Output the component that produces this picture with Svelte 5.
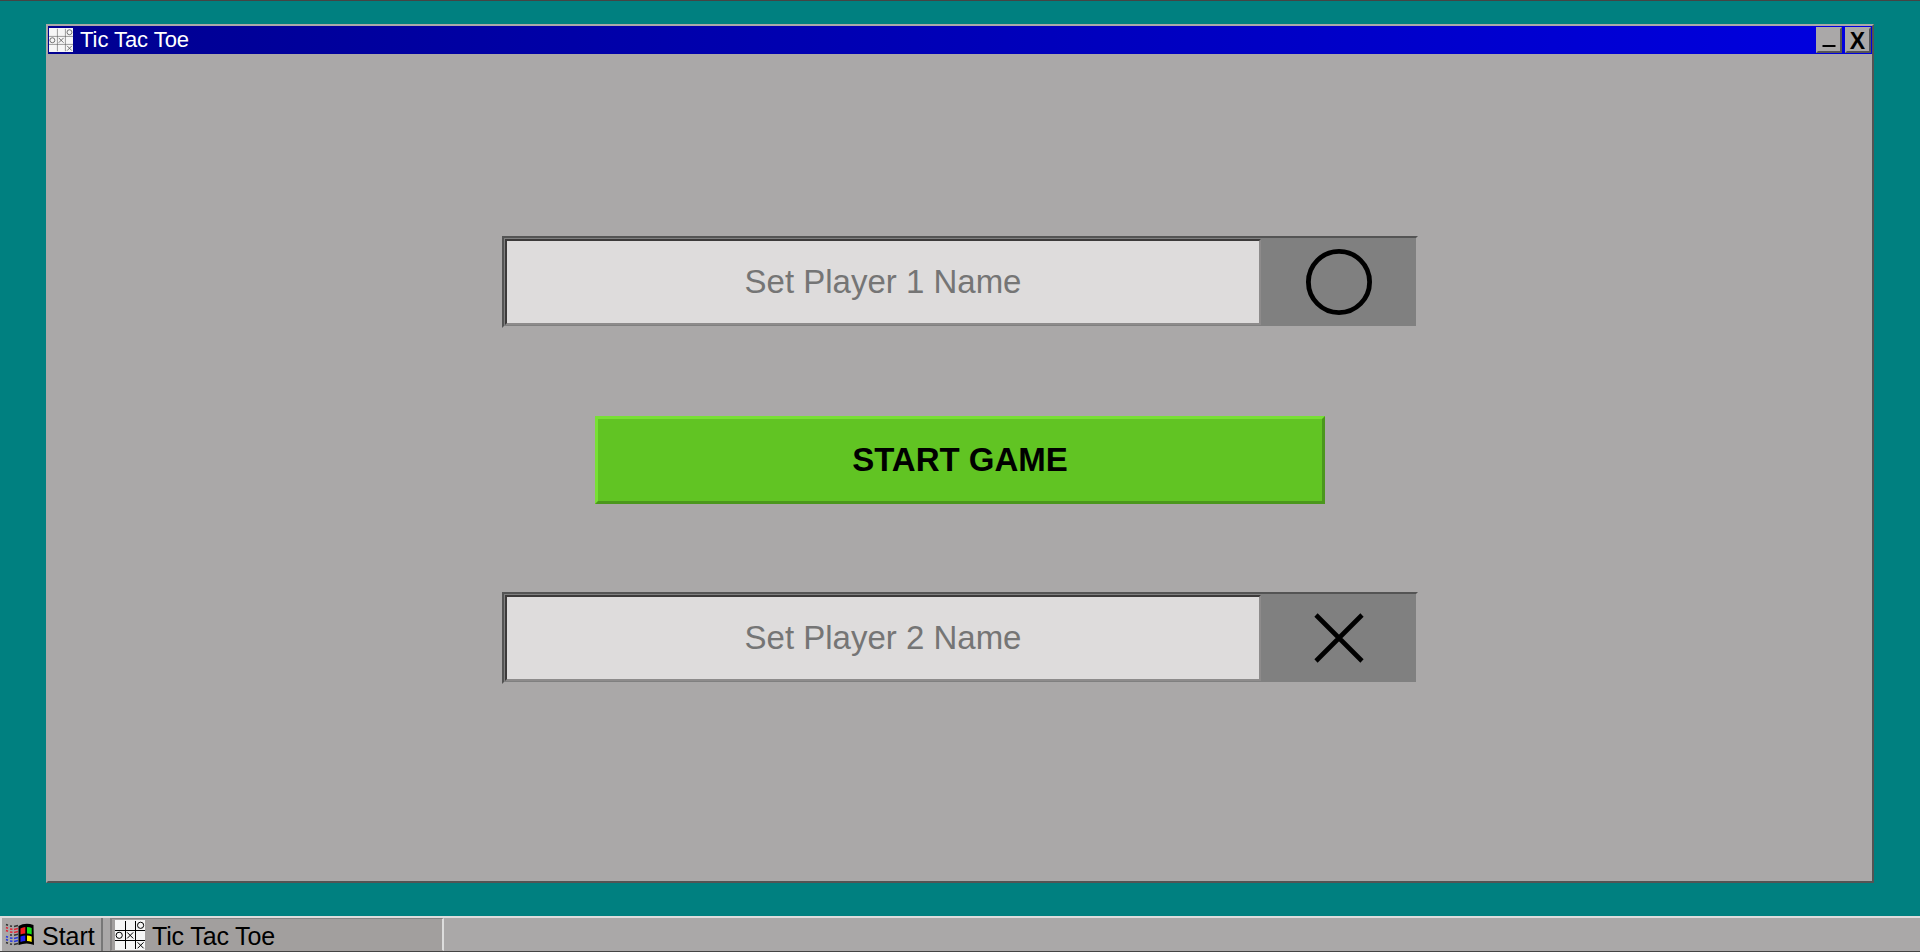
<script>
  const players = [
    { hint: 'Set Player 1 Name', mark: 'o' },
    { hint: 'Set Player 2 Name', mark: 'x' }
  ];
</script>

{#snippet board(size, color, thin)}
  <svg class="board" width={size} height={size} viewBox="0 0 30 30" fill="none" stroke={color}>
    <rect width="30" height="30" fill="#f6f6f6" stroke="none" />
    <path d="M10.5 1v28M20.5 1v28M0 10.5h30M0 20.5h30" stroke-width={thin} />
    <circle cx="25.6" cy="5.3" r="3.1" />
    <circle cx="4.2" cy="15.3" r="3.1" />
    <path d="M12.2 12.4l6 6M18.2 12.4l-6 6M22.6 22.3l6 6M28.6 22.3l-6 6" />
  </svg>
{/snippet}

{#snippet player(p)}
  <div class="player">
    <input type="text" placeholder={p.hint} />
    <div class="mark">
      <svg width="70" height="70" viewBox="0 0 70 70" fill="none" stroke="#000" stroke-width="4.8">
        {#if p.mark === 'o'}
          <circle cx="35" cy="35" r="30.6" />
        {:else}
          <path d="M12 12l46 46M58 12l-46 46" stroke-width="4.6" />
        {/if}
      </svg>
    </div>
  </div>
{/snippet}

<div class="screen">
  <main class="desktop">
    <section class="window">
      <header>
        {@render board(24, '#555', 0.7)}
        <h1>Tic Tac Toe</h1>
        <button class="control" aria-label="Minimize"><svg width="22" height="22"><path d="M4.5 16h13v2h-13z" /></svg></button>
        <button class="control close" aria-label="Close">X</button>
      </header>
      <div class="form">
        {@render player(players[0])}
        <button class="play">START GAME</button>
        {@render player(players[1])}
      </div>
    </section>
  </main>
  <footer>
    <button class="start">
      <svg width="30" height="24" viewBox="0 0 30 24">
        <path d="M13.500 3q7-4 15-1l.5 20q-7-3-15.500 0z" fill="#000" />
        <path d="M15.500 5.500q2.500-1.500 4.800-1.500v6.500q-2.300 0-4.800 1z" fill="#f02020" />
        <path d="M22 4q2.500 0 4.700 1v6.500q-2.200-1-4.700-1z" fill="#18e018" />
        <path d="M15.500 13.500q2.500-1 4.800-1v5.500q-2.300 0-4.800 1z" fill="#2020f0" />
        <path d="M22 12.500q2.500 0 4.700 1v5.500q-2.200-1-4.700-1z" fill="#fff000" />
        <g fill="none" stroke-width="1.600">
          <path d="M1 1.500l2 .7M5 3l2 .3M9 3.500l4-1M1 19.500l2 .7M5 21l2 .3M9 21.500l4-1M5 12h2M9 12.300l4-1" stroke="#333" />
          <path d="M1 4.500l2 .7M5 6l2.500 .3M9 6.500l4-1M1 7.500l2 .7M5 9l2.500 .3M9 9.500l4-1" stroke="#e02838" />
          <path d="M1 13.500l2 .7M5 15l2.500 .3M9 15.500l4-1M1 16.500l2 .7M5 18l2.500 .3M9 18.500l4-1" stroke="#2838e0" />
        </g>
      </svg>
      <span>Start</span>
    </button>
    <button class="task">{@render board(30, '#000', 1)}<span>Tic Tac Toe</span></button>
  </footer>
</div>

<style>
  :global(body) { margin: 0; }
  .screen, .screen * { box-sizing: border-box; }
  .screen {
    width: 100%; height: 952px; display: flex; flex-direction: column; overflow: hidden;
    background: #008080; font-family: "Liberation Sans", Arial, sans-serif;
    border-top: 1px solid #444; border-bottom: 1px solid #444;
  }
  button { font-family: inherit; margin: 0; padding: 0; border-radius: 0; color: #000; }
  svg { display: block; flex: none; }
  .desktop { flex: 1; min-height: 0; padding: 23px 46px 33px; display: flex; }
  .window {
    flex: 1; display: flex; flex-direction: column; background: #aaa8a8;
    border: 2px solid; border-color: #aaa8a8 #545454 #545454 #aaa8a8;
  }
  header {
    height: 28px; display: flex; align-items: center; padding: 0 1px;
    background: linear-gradient(90deg, #000090, #0000e0); color: #fff;
  }
  h1 { flex: 1; margin: 0 0 0 7px; font-size: 22px; line-height: 26px; font-weight: 400; letter-spacing: -0.06px; }
  .control {
    width: 26px; height: 26px; background: #aaa8a8; border: 2px solid;
    border-color: #aaa8a8 #555 #555 #aaa8a8; font-size: 22px; line-height: 26px; font-weight: 700;
  }
  .control + .control { margin-left: 3px; }
  .close { font-size: 23px; padding-right: 1px; line-height: 25px; }
  .form { flex: 1; display: flex; flex-direction: column; align-items: center; padding-top: 182px; }
  .player {
    width: 916px; height: 92px; display: flex; padding: 1px 0; background: #808080;
    border: 2px solid; border-color: #545454 #aaa8a8 #aaa8a8 #545454;
  }
  input {
    width: 756px; height: 86px; margin: 0 0 0 1px; padding: 0; text-align: center;
    background: #dedcdc; border: 2px solid; border-color: #3c3a3a #8d8b8b #8d8b8b #3c3a3a;
    border-radius: 0; font: 33px "Liberation Sans", Arial, sans-serif; outline: 0;
  }
  input::placeholder { color: #757575; opacity: 1; }
  .mark { flex: 1; display: flex; align-items: center; justify-content: center; }
  .play {
    width: 730px; height: 88px; margin: 88px 0; background: #61c423; border: 3px solid;
    border-color: #78e035 #4b971c #4b971c #78e035; font-size: 33px; font-weight: 700;
  }
  footer { height: 35px; display: flex; background: #aaa8a8; border-top: 2px solid #ddd; }
  footer button { display: flex; align-items: center; font-size: 25px; background: #aaa8a8; }
  footer span { padding-top: 4px; }
  .start { width: 103px; padding-left: 3px; border: solid; border-width: 0 2px; border-color: #ddd #777 #ddd #ddd; }
  .start span { margin-left: 7px; }
  .task {
    width: 334px; margin-left: 7px; padding-left: 3px; border: solid; border-width: 1px 2px;
    border-color: #848282 #ddd #a29f9e #848282;
  }
  footer .task { background: #a29f9e; }
  .task span { margin-left: 7px; letter-spacing: -0.15px; }
</style>
